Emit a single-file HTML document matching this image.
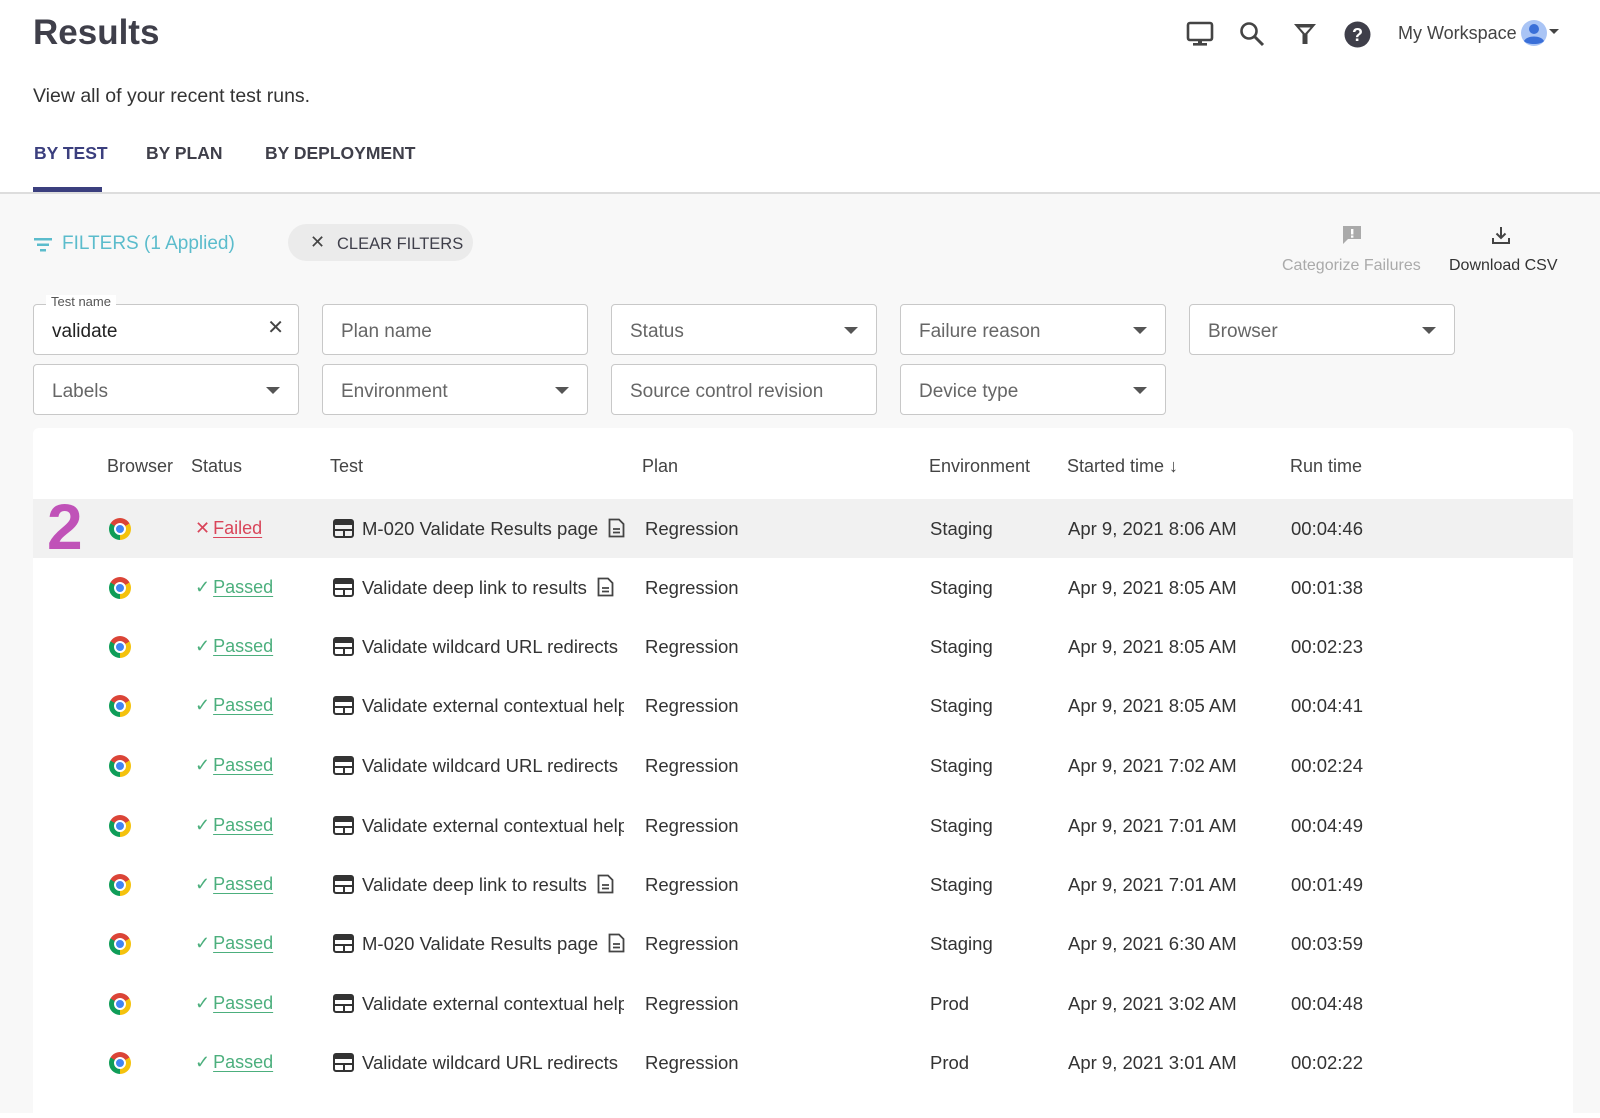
<!DOCTYPE html>
<html><head><meta charset="utf-8"><style>
*{box-sizing:border-box;margin:0;padding:0}
body{width:1600px;height:1113px;overflow:hidden;background:#fff;font-family:"Liberation Sans",sans-serif;color:#333;position:relative}
.a{position:absolute;white-space:nowrap}
.top{position:absolute;left:0;top:0;width:1600px;height:194px;background:#fff;border-bottom:2px solid #ddd}
.gray{position:absolute;left:0;top:194px;width:1600px;height:919px;background:#f8f8f8}
.inp{position:absolute;width:266px;height:51px;border:1px solid #c8c8c8;border-radius:4px;background:#fff;font-size:19px;color:#666;padding:15px 18px 11px;line-height:24px}
.inp .car{position:absolute;right:18px;top:22px;width:0;height:0;border-left:7px solid transparent;border-right:7px solid transparent;border-top:7px solid #555}
.card{position:absolute;left:33px;top:428px;width:1540px;height:690px;background:#fff;border-radius:6px}
.th{position:absolute;top:456px;font-size:18px;color:#444}
.row{position:absolute;left:33px;width:1540px;height:59px}
.row .c{position:absolute;top:0;line-height:59px;font-size:18.5px;color:#333;white-space:nowrap}
.chrome{position:absolute;left:76px;top:19px;width:22px;height:22px;border-radius:50%;background:conic-gradient(from -60deg,#db4437 0 120deg,#f4c20d 120deg 240deg,#0f9d58 240deg 360deg)}
.chrome:after{content:"";position:absolute;left:5px;top:5px;width:12px;height:12px;border-radius:50%;background:#4285f4;border:2px solid #fff;box-sizing:border-box}
.st{font-size:18px!important}
.st u{text-underline-offset:3px;margin-left:3px}
.pass{color:#4caf7d!important}
.fail{color:#d9455a!important}
.tn{width:262px;overflow:hidden}
</style></head><body>
<div class="top"></div>
<div class="gray"></div>
<div class="a" style="left:33px;top:13px;font-size:35px;font-weight:bold;color:#3f3f4a">Results</div>
<svg class="a" style="left:1186px;top:21px" width="28" height="26" viewBox="0 0 28 26"><rect x="2" y="2" width="24" height="17" rx="2" fill="none" stroke="#444" stroke-width="2.6"/><rect x="12" y="19" width="4" height="4" fill="#444"/><rect x="7" y="22" width="14" height="2.6" fill="#444"/></svg>
<svg class="a" style="left:1239px;top:21px" width="26" height="26" viewBox="0 0 26 26"><circle cx="10" cy="10" r="7.5" fill="none" stroke="#444" stroke-width="2.6"/><path d="M15.5 15.5L24 24" stroke="#444" stroke-width="3"/></svg>
<svg class="a" style="left:1293px;top:22px" width="24" height="24" viewBox="0 0 24 24"><path d="M1 2H23L14.5 12V22H9.5V12Z" fill="#444"/><path d="M6.5 5.5H17.5L12 11.5Z" fill="#fff"/></svg>
<svg class="a" style="left:1344px;top:21px" width="27" height="27" viewBox="0 0 27 27"><circle cx="13.5" cy="13.5" r="13" fill="#3f3f4a"/><text x="13.5" y="20" text-anchor="middle" font-size="18" font-weight="bold" fill="#fff" font-family="Liberation Sans">?</text></svg>
<div class="a" style="left:1398px;top:23px;font-size:18px;color:#444">My Workspace</div>
<svg class="a" style="left:1520px;top:19px" width="50" height="28" viewBox="0 0 50 28"><circle cx="14" cy="14" r="13" fill="#a9c4f5"/><circle cx="14" cy="10" r="5" fill="#3a6fd8"/><path d="M4 22C7 16 21 16 24 22C21 26 7 26 4 22Z" fill="#3a6fd8"/><path d="M29 10H39L34 15Z" fill="#444"/></svg>
<div class="a" style="left:33px;top:85px;font-size:19.5px;color:#333">View all of your recent test runs.</div>
<div class="a" style="left:34px;top:143px;font-size:17.5px;font-weight:bold;color:#3b3f7e">BY TEST</div>
<div class="a" style="left:146px;top:143px;font-size:17.5px;font-weight:bold;color:#3f3f4a">BY PLAN</div>
<div class="a" style="left:265px;top:143px;font-size:17.5px;font-weight:bold;color:#3f3f4a">BY DEPLOYMENT</div>
<div class="a" style="left:33px;top:187px;width:69px;height:5px;background:#3b3f7e"></div>

<svg class="a" style="left:34px;top:238px" width="18" height="14" viewBox="0 0 18 14"><rect x="0" y="0" width="18" height="2.5" fill="#5bbccc"/><rect x="3" y="5.5" width="12" height="2.5" fill="#5bbccc"/><rect x="6" y="11" width="6" height="2.5" fill="#5bbccc"/></svg>
<div class="a" style="left:62px;top:233px;font-size:19px;color:#5bbccc">FILTERS (1 Applied)</div>
<div class="a" style="left:288px;top:224px;width:185px;height:37px;border-radius:19px;background:#ebebeb"></div>
<div class="a" style="left:310px;top:232px;font-size:18px;color:#444">✕</div>
<div class="a" style="left:337px;top:235px;font-size:16.5px;color:#3f3f4a">CLEAR FILTERS</div>
<svg class="a" style="left:1342px;top:225px" width="20" height="20" viewBox="0 0 20 20"><path d="M1 1H19V14H6L1 19Z" fill="#aaa"/><rect x="9" y="4" width="2.4" height="5.5" fill="#fff"/><rect x="9" y="10.5" width="2.4" height="2.2" fill="#fff"/></svg>
<div class="a" style="left:1282px;top:257px;font-size:16px;color:#aaa">Categorize Failures</div>
<svg class="a" style="left:1491px;top:225px" width="20" height="20" viewBox="0 0 20 20"><path d="M10 2V13M5.5 8.5L10 13L14.5 8.5" fill="none" stroke="#444" stroke-width="2"/><path d="M2 13V18H18V13" fill="none" stroke="#444" stroke-width="2"/></svg>
<div class="a" style="left:1449px;top:257px;font-size:16px;color:#333">Download CSV</div>

<div class="inp" style="left:33px;top:304px;color:#222">validate<span style="position:absolute;right:14px;top:11px;font-size:20px;color:#444">✕</span></div>
<div class="a" style="left:46px;top:295px;background:#fff;padding:0 5px;font-size:13px;color:#555;line-height:13px">Test name</div>
<div class="inp" style="left:322px;top:304px">Plan name</div>
<div class="inp" style="left:611px;top:304px">Status<span class="car"></span></div>
<div class="inp" style="left:900px;top:304px">Failure reason<span class="car"></span></div>
<div class="inp" style="left:1189px;top:304px">Browser<span class="car"></span></div>
<div class="inp" style="left:33px;top:364px">Labels<span class="car"></span></div>
<div class="inp" style="left:322px;top:364px">Environment<span class="car"></span></div>
<div class="inp" style="left:611px;top:364px">Source control revision</div>
<div class="inp" style="left:900px;top:364px">Device type<span class="car"></span></div>

<div class="card"></div>
<div class="th" style="left:107px">Browser</div>
<div class="th" style="left:191px">Status</div>
<div class="th" style="left:330px">Test</div>
<div class="th" style="left:642px">Plan</div>
<div class="th" style="left:929px">Environment</div>
<div class="th" style="left:1067px">Started time ↓</div>
<div class="th" style="left:1290px">Run time</div>

<div id="rows"></div>
<script>
const rows=[
["Failed","M-020 Validate Results page",1,"Staging","Apr 9, 2021 8:06 AM","00:04:46"],
["Passed","Validate deep link to results",1,"Staging","Apr 9, 2021 8:05 AM","00:01:38"],
["Passed","Validate wildcard URL redirects",0,"Staging","Apr 9, 2021 8:05 AM","00:02:23"],
["Passed","Validate external contextual help",0,"Staging","Apr 9, 2021 8:05 AM","00:04:41"],
["Passed","Validate wildcard URL redirects",0,"Staging","Apr 9, 2021 7:02 AM","00:02:24"],
["Passed","Validate external contextual help",0,"Staging","Apr 9, 2021 7:01 AM","00:04:49"],
["Passed","Validate deep link to results",1,"Staging","Apr 9, 2021 7:01 AM","00:01:49"],
["Passed","M-020 Validate Results page",1,"Staging","Apr 9, 2021 6:30 AM","00:03:59"],
["Passed","Validate external contextual help",0,"Prod","Apr 9, 2021 3:02 AM","00:04:48"],
["Passed","Validate wildcard URL redirects",0,"Prod","Apr 9, 2021 3:01 AM","00:02:22"]];
const ys=[499,558,617,676,736,796,855,914,974,1033];
const tic='<svg style="position:absolute;left:0;top:20px" width="21" height="19" viewBox="0 0 21 19"><rect x="1" y="1" width="19" height="17" rx="2" fill="none" stroke="#333" stroke-width="2"/><rect x="1" y="1" width="19" height="5" fill="#333"/><path d="M1 11H20M11 11V18" stroke="#333" stroke-width="2"/></svg>';
const doc='<svg width="17" height="20" viewBox="0 0 17 20" style="vertical-align:-3px"><path d="M1.5 1.5H11L15.5 6V18.5H1.5Z" fill="none" stroke="#444" stroke-width="1.8"/><path d="M5 11H12M5 14.5H12" stroke="#444" stroke-width="1.8"/></svg>';
let h='';
rows.forEach((r,i)=>{
const f=r[0]=="Failed";
h+=`<div class="row" style="top:${ys[i]}px;${i==0?'background:#f1f1f1':''}"><div class="chrome"></div>
<div class="c st ${f?'fail':'pass'}" style="left:162px">${f?'✕':'✓'}<u>${r[0]}</u></div>
<div class="c" style="left:300px;width:310px">${tic}<span class="c tn" style="left:29px;${r[2]?'width:auto':''}">${r[1]}${r[2]?' &nbsp;'+doc:''}</span></div>
<div class="c" style="left:612px">Regression</div>
<div class="c" style="left:897px">${r[3]}</div>
<div class="c" style="left:1035px">${r[4]}</div>
<div class="c" style="left:1258px">${r[5]}</div></div>`;});
document.getElementById('rows').innerHTML=h;
</script>
<div class="a" style="left:47px;top:490px;font-size:64px;font-weight:bold;color:#c052b8;line-height:74px">2</div>
</body></html>
